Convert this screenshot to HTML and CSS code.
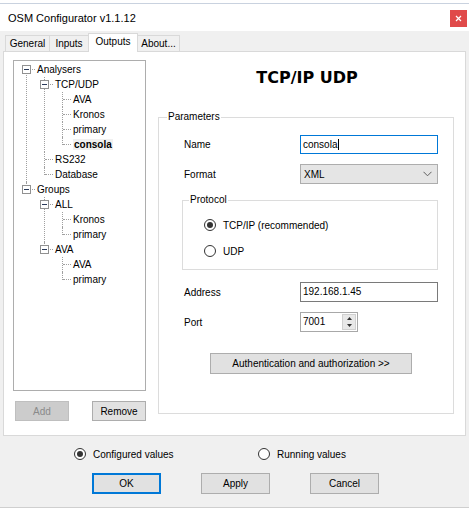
FILE: index.html
```html
<!DOCTYPE html>
<html>
<head>
<meta charset="utf-8">
<link rel="stylesheet" href="styles.css">
</head>
<body>
<div class="window">
  <div class="titlebar">
    <span class="title">OSM Configurator v1.1.12</span>
    <div class="close"><svg width="7" height="7" viewBox="0 0 7 7"><path d="M1 1L6 6M6 1L1 6" stroke="#fff" stroke-width="1.2"/></svg></div>
  </div>
  <div class="client">
    <div class="tabs">
      <div class="tab t-general">General</div>
      <div class="tab t-inputs">Inputs</div>
      <div class="tab t-outputs active">Outputs</div>
      <div class="tab t-about">About...</div>
    </div>
    <div class="page">
      <div class="left">
        <div class="tree">
          <ul>
            <li class="first">
              <div class="row"><span class="exp"></span>Analysers</div>
              <ul>
                <li>
                  <div class="row"><span class="exp"></span>TCP/UDP</div>
                  <ul>
                    <li><div class="row">AVA</div></li>
                    <li><div class="row">Kronos</div></li>
                    <li><div class="row">primary</div></li>
                    <li class="last"><div class="row"><span class="sel">consola</span></div></li>
                  </ul>
                </li>
                <li><div class="row">RS232</div></li>
                <li class="last"><div class="row">Database</div></li>
              </ul>
            </li>
            <li class="last">
              <div class="row"><span class="exp"></span>Groups</div>
              <ul>
                <li>
                  <div class="row"><span class="exp"></span>ALL</div>
                  <ul>
                    <li><div class="row">Kronos</div></li>
                    <li class="last"><div class="row">primary</div></li>
                  </ul>
                </li>
                <li class="last">
                  <div class="row"><span class="exp"></span>AVA</div>
                  <ul>
                    <li><div class="row">AVA</div></li>
                    <li class="last"><div class="row">primary</div></li>
                  </ul>
                </li>
              </ul>
            </li>
          </ul>
        </div>
        <div class="tree-buttons">
          <div class="btn btn-add disabled">Add</div>
          <div class="btn btn-remove">Remove</div>
        </div>
      </div>
      <div class="right">
        <h1 class="heading">TCP/IP UDP</h1>
        <div class="group params">
          <div class="legend">Parameters</div>
          <div class="field f-name">
            <span class="label">Name</span>
            <div class="input focus"><span class="caret">consola</span></div>
          </div>
          <div class="field f-format">
            <span class="label">Format</span>
            <div class="select"><span>XML</span><svg width="9" height="6" viewBox="0 0 9 6"><path d="M0.5 0.8L4.5 4.8L8.5 0.8" fill="none" stroke="#606060" stroke-width="1"/></svg></div>
          </div>
          <div class="group protocol">
            <div class="legend">Protocol</div>
            <div class="radio r-tcp"><span class="circle checked"></span><span>TCP/IP (recommended)</span></div>
            <div class="radio r-udp"><span class="circle"></span><span>UDP</span></div>
          </div>
          <div class="field f-address">
            <span class="label">Address</span>
            <div class="input">192.168.1.45</div>
          </div>
          <div class="field f-port">
            <span class="label">Port</span>
            <div class="spin">
              <span class="spin-val">7001</span>
              <div class="spin-btns">
                <svg width="5" height="3" viewBox="0 0 5 3"><path d="M2.5 0L5 3H0Z" fill="#333"/></svg>
                <svg width="5" height="3" viewBox="0 0 5 3"><path d="M0 0H5L2.5 3Z" fill="#333"/></svg>
              </div>
            </div>
          </div>
          <div class="auth-wrap"><div class="btn btn-auth">Authentication and authorization &gt;&gt;</div></div>
        </div>
      </div>
    </div>
    <div class="mode">
      <div class="radio r-configured"><span class="circle checked"></span><span>Configured values</span></div>
      <div class="radio r-running"><span class="circle"></span><span>Running values</span></div>
    </div>
    <div class="actions">
      <div class="btn btn-action default">OK</div>
      <div class="btn btn-action">Apply</div>
      <div class="btn btn-action">Cancel</div>
    </div>
  </div>
</div>
</body>
</html>
```
FILE: styles.css
```css
* { box-sizing: border-box; }

body {
  margin: 0;
  width: 469px;
  height: 510px;
  overflow: hidden;
  background: #fff;
  color: #000;
  font-family: "Liberation Sans", Arial, sans-serif;
  font-size: 10px;
}

.window {
  margin-top: 3px;
  border-top: 1px solid #c9d2df;
}

.titlebar {
  height: 27px;
  background: #fff;
  display: flex;
  align-items: center;
  justify-content: space-between;
  padding: 0 2px 0 8px;
}

.title {
  font-size: 11px;
  color: #000;
}

.close {
  width: 17px;
  height: 17px;
  margin-top: 1px;
  background: #e04a4a;
  display: flex;
  align-items: center;
  justify-content: center;
}

.client {
  height: 477px;
  background: #f0f0f0;
  border-bottom: 1px solid #cfcfcf;
  padding: 2px 3px 0 3px;
}

/* Tabs */
.tabs {
  display: flex;
  align-items: flex-end;
  height: 18px;
  padding-left: 2px;
}

.tab {
  height: 16px;
  border: 1px solid #d9d9d9;
  border-bottom: none;
  background: #f0f0f0;
  margin-right: -1px;
  display: flex;
  align-items: center;
  justify-content: center;
  padding-bottom: 1px;
}

.t-general { width: 45px; }
.t-inputs { width: 40px; }
.t-outputs { width: 50px; }
.t-about { width: 43px; }

.tab.active {
  height: 19px;
  margin-bottom: -1px;
  background: #fff;
  position: relative;
  z-index: 1;
  padding-bottom: 3px;
}

/* Page */
.page {
  height: 385px;
  background: #fff;
  border: 1px solid #d9d9d9;
  display: flex;
  gap: 12px;
  padding: 8px 0 0 9px;
}

.left {
  width: 133px;
  display: flex;
  flex-direction: column;
}

.tree {
  height: 331px;
  border: 1px solid #adadad;
  padding-top: 1px;
  background: #fff;
}

.tree ul {
  list-style: none;
  margin: 0;
  padding: 0;
}

.tree ul ul {
  margin-left: 18px;
}

.tree li {
  position: relative;
}

.tree li::before {
  content: "";
  position: absolute;
  left: 12px;
  top: 0;
  bottom: 0;
  border-left: 1px dotted #a0a0a0;
}

.tree li.first::before { top: 8px; }
.tree li.last::before { bottom: auto; height: 8px; }

.row {
  position: relative;
  height: 15px;
  line-height: 15px;
  padding-left: 23px;
  white-space: nowrap;
  color: #000;
}

.row::before {
  content: "";
  position: absolute;
  left: 13px;
  top: 7px;
  width: 8px;
  border-top: 1px dotted #a0a0a0;
}

.exp {
  position: absolute;
  left: 8px;
  top: 3px;
  width: 9px;
  height: 9px;
  border: 1px solid #919191;
  background: #fff;
  z-index: 1;
}

.exp::after {
  content: "";
  position: absolute;
  left: 1px;
  top: 3px;
  width: 5px;
  height: 1px;
  background: #2a3a5a;
}

.sel {
  font-weight: bold;
  background: #f0f0f0;
  padding: 0 1px;
}

.tree-buttons {
  display: flex;
  justify-content: space-between;
  margin-top: 10px;
  padding-left: 2px;
}

.btn {
  height: 20px;
  border: 1px solid #adadad;
  background: #e1e1e1;
  display: flex;
  align-items: center;
  justify-content: center;
  color: #000;
  white-space: nowrap;
}

.btn-add, .btn-remove { width: 54px; }

.btn.disabled {
  background: #cccccc;
  border-color: #bfbfbf;
  color: #8a8a8a;
}

/* Right */
.right {
  width: 296px;
  display: flex;
  flex-direction: column;
}

.heading {
  margin: 8px 0 0 0;
  font-family: "DejaVu Sans", Verdana, sans-serif;
  font-size: 16px;
  line-height: 20px;
  font-weight: bold;
  text-align: center;
  padding-left: 2px;
}

.group {
  border: 1px solid #dcdcdc;
}

.legend {
  width: max-content;
  line-height: 12px;
  background: #fff;
  padding: 0 1px;
  margin-top: -7px;
}

.params {
  margin-top: 29px;
  padding: 0 15px 39px 25px;
}

.params > .legend { margin-left: -17px; }

.field {
  display: grid;
  grid-template-columns: 116px 138px;
  align-items: center;
}

.f-name { margin-top: 12px; }
.f-format { margin-top: 10px; }
.f-address { margin-top: 12px; }
.f-port { margin-top: 10px; }

.input {
  height: 20px;
  border: 1px solid #7a7a7a;
  background: #fff;
  padding-left: 2px;
  line-height: 18px;
}

.f-name .input { height: 19px; line-height: 17px; }

.input.focus { border-color: #0078d7; }

.caret {
  border-right: 1px solid #000;
  padding-right: 1px;
}

.select {
  height: 20px;
  border: 1px solid #adadad;
  background: #e5e5e5;
  display: flex;
  align-items: center;
  justify-content: space-between;
  padding: 0 5px 0 3px;
}

.protocol {
  margin: 16px 0 0 -2px;
  width: 256px;
  padding: 0 0 10px 0;
}

.protocol > .legend { margin-left: 6px; }

.radio {
  display: flex;
  align-items: center;
  gap: 7px;
  height: 16px;
  white-space: nowrap;
}

.circle {
  width: 12px;
  height: 12px;
  border: 1px solid #333;
  border-radius: 50%;
  background: #fff;
  display: flex;
  align-items: center;
  justify-content: center;
  flex: none;
}

.circle.checked::after {
  content: "";
  width: 6px;
  height: 6px;
  border-radius: 50%;
  background: #333;
}

.r-tcp { margin: 11px 0 0 21px; }
.r-udp { margin: 10px 0 0 21px; }

.spin {
  width: 58px;
  height: 20px;
  border: 1px solid #a8a8a8;
  background: #fff;
  display: flex;
  justify-content: space-between;
}

.spin-val {
  padding-left: 2px;
  line-height: 18px;
}

.spin-btns {
  width: 14px;
  margin: 1px;
  background: #e8e8e8;
  border: 1px solid #d0d0d0;
  display: flex;
  flex-direction: column;
  align-items: center;
  justify-content: space-around;
}

.auth-wrap {
  display: flex;
  justify-content: center;
  margin-top: 21px;
}

.btn-auth {
  width: 202px;
  height: 21px;
}

/* Bottom */
.mode {
  display: flex;
  margin-top: 10px;
  padding-left: 71px;
}

.r-configured { width: 184px; }

.actions {
  display: flex;
  gap: 40px;
  margin-top: 11px;
  padding-left: 89px;
}

.btn-action {
  width: 69px;
  height: 21px;
}

.btn.default {
  border-color: #0078d7;
  box-shadow: inset 0 0 0 1px #0078d7;
}
```
